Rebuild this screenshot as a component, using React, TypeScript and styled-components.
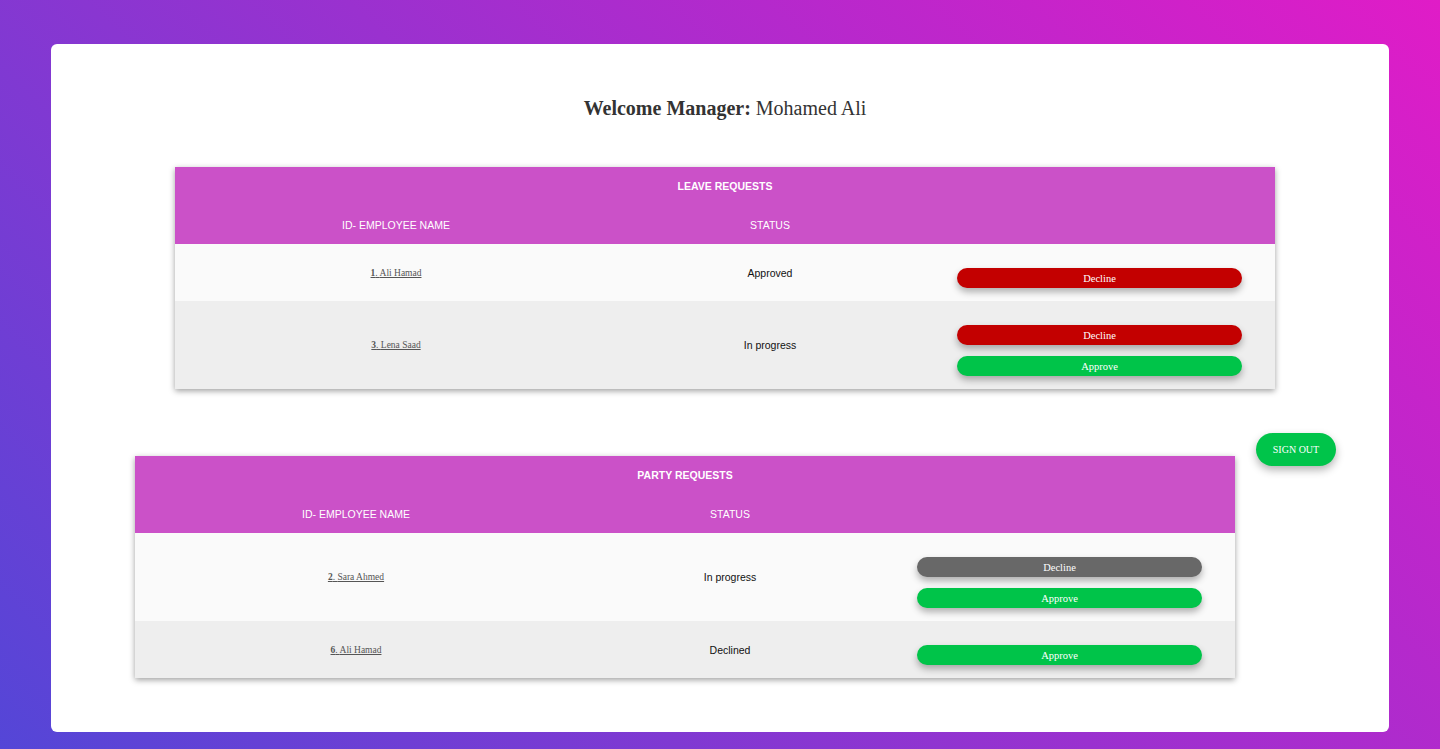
import React from "react";
import styled, { createGlobalStyle } from "styled-components";

const GlobalStyle = createGlobalStyle`
  html, body {
    margin: 0;
    padding: 0;
  }
  body {
    width: 1440px;
    height: 749px;
    overflow: hidden;
    background: linear-gradient(45deg, #5446d7 0%, #e01cc7 100%);
    font-family: "Liberation Serif", "Times New Roman", serif;
  }
`;

const Page = styled.div`
  padding: 44px 51px 0;
`;

const Card = styled.main`
  background: #ffffff;
  border-radius: 6px;
  height: 688px;
  box-sizing: border-box;
  display: flex;
  flex-direction: column;
  padding-top: 50px;
`;

const Title = styled.h1`
  margin: 0;
  padding-left: 10px;
  text-align: center;
  font-family: "Liberation Serif", "Times New Roman", serif;
  font-size: 20px;
  line-height: 28px;
  font-weight: normal;
  color: #333333;
  b {
    font-weight: bold;
  }
`;

const TableWrap = styled.section<{ $left: number }>`
  width: 1100px;
  margin-left: ${(p) => p.$left}px;
  box-shadow: 0 2px 6px rgba(0, 0, 0, 0.38);
  display: flex;
  flex-direction: column;
`;

const Header = styled.div`
  background: #cb51c8;
  color: #ffffff;
  font-family: "Liberation Sans", Arial, sans-serif;
`;

const Caption = styled.div`
  height: 38px;
  display: flex;
  align-items: center;
  justify-content: center;
  font-size: 10.5px;
  font-weight: bold;
  box-sizing: border-box;
`;

const Grid = styled.div`
  display: grid;
  grid-template-columns: 442px 306px 352px;
`;

const HeadRow = styled(Grid)`
  height: 39px;
  align-items: center;
  font-size: 10.5px;
  text-align: center;
`;

const Row = styled(Grid)<{ $alt: boolean }>`
  background: ${(p) => (p.$alt ? "#eeeeee" : "#fafafa")};
  padding: 13px 0;
  align-items: center;
  text-align: center;
`;

const NameCell = styled.div`
  margin-bottom: 4px;
`;

const StatusCell = styled.div`
  margin-bottom: 2px;
`;

const NameLink = styled.a`
  font-family: "Liberation Serif", "Times New Roman", serif;
  font-size: 9.5px;
  color: #555555;
  text-decoration: underline;
  cursor: pointer;
  b {
    font-weight: bold;
  }
`;

const Status = styled.span`
  font-family: "Liberation Sans", Arial, sans-serif;
  font-size: 10.5px;
  color: #111111;
`;

const Actions = styled.div`
  display: flex;
  flex-direction: column;
  padding: 0 33px 0 34px;
`;

const ActionButton = styled.button<{ $color: string }>`
  margin-top: 11px;
  height: 20px;
  border: none;
  border-radius: 10px;
  background: ${(p) => p.$color};
  color: #ffffff;
  font-family: "Liberation Serif", "Times New Roman", serif;
  font-size: 10.5px;
  padding: 0;
  box-shadow: 0 4px 7px rgba(0, 0, 0, 0.3);
  cursor: pointer;
`;

const LowerRow = styled.div`
  display: flex;
  align-items: flex-start;
  margin-top: 44px;
`;

const LowerTable = styled.div`
  margin-top: 23px;
`;

const SignOut = styled.button`
  margin-left: 21px;
  width: 80px;
  height: 33px;
  border: none;
  border-radius: 17px;
  background: #00c44a;
  color: #ffffff;
  font-family: "Liberation Serif", "Times New Roman", serif;
  font-size: 10px;
  padding: 0;
  box-shadow: 0 4px 8px rgba(0, 0, 0, 0.3);
  cursor: pointer;
`;

const TopSpacer = styled.div`
  height: 45px;
`;

type Btn = "decline" | "declineGray" | "approve";

const colors: Record<Btn, string> = {
  decline: "#c30000",
  declineGray: "#686868",
  approve: "#00c449",
};

const labels: Record<Btn, string> = {
  decline: "Decline",
  declineGray: "Decline",
  approve: "Approve",
};

type Req = { id: number; name: string; status: string; buttons: Btn[] };

const leave: Req[] = [
  { id: 1, name: "Ali Hamad", status: "Approved", buttons: ["decline"] },
  { id: 3, name: "Lena Saad", status: "In progress", buttons: ["decline", "approve"] },
];

const party: Req[] = [
  { id: 2, name: "Sara Ahmed", status: "In progress", buttons: ["declineGray", "approve"] },
  { id: 6, name: "Ali Hamad", status: "Declined", buttons: ["approve"] },
];

const RequestTable: React.FC<{ title: string; rows: Req[]; left: number }> = ({
  title,
  rows,
  left,
}) => (
  <TableWrap $left={left}>
    <Header>
      <Caption>{title}</Caption>
      <HeadRow>
        <div>ID- EMPLOYEE NAME</div>
        <div>STATUS</div>
        <div />
      </HeadRow>
    </Header>
    {rows.map((r, i) => (
      <Row key={r.id} $alt={i % 2 === 1}>
        <NameCell>
          <NameLink>
            <b>{r.id}</b>. {r.name}
          </NameLink>
        </NameCell>
        <StatusCell>
          <Status>{r.status}</Status>
        </StatusCell>
        <Actions>
          {r.buttons.map((b, j) => (
            <ActionButton key={j} $color={colors[b]}>
              {labels[b]}
            </ActionButton>
          ))}
        </Actions>
      </Row>
    ))}
  </TableWrap>
);

export default function App() {
  return (
    <>
      <GlobalStyle />
      <Page>
        <Card>
          <Title>
            <b>Welcome Manager:</b> Mohamed Ali
          </Title>
          <TopSpacer />
          <RequestTable title="LEAVE REQUESTS" rows={leave} left={124} />
          <LowerRow>
            <LowerTable>
              <RequestTable title="PARTY REQUESTS" rows={party} left={84} />
            </LowerTable>
            <SignOut>SIGN OUT</SignOut>
          </LowerRow>
        </Card>
      </Page>
    </>
  );
}
